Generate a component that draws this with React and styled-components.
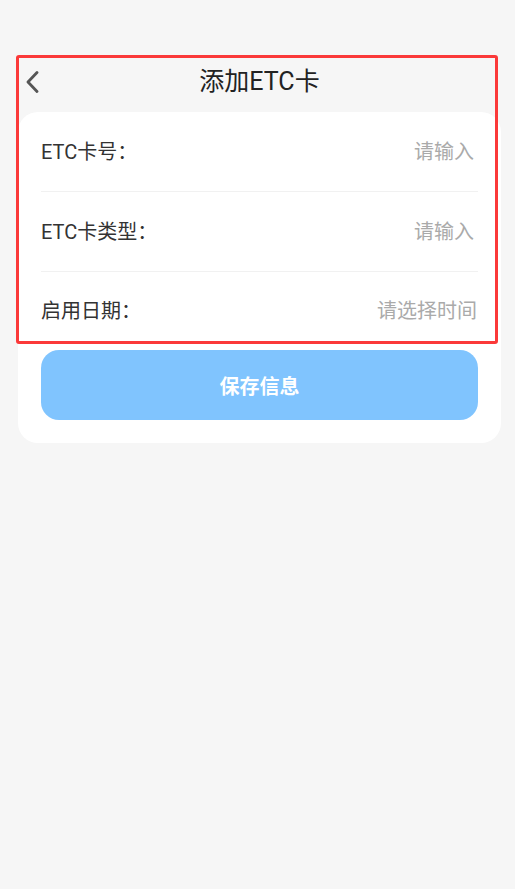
import React from "react";
import styled, { createGlobalStyle } from "styled-components";

const Global = createGlobalStyle`
  html, body { margin: 0; padding: 0; background: #f6f6f6; }
  body { font-family: Roboto, "Noto Sans CJK SC", sans-serif; }
  * { box-sizing: border-box; }
`;

const Page = styled.div`
  position: relative;
  min-height: 889px;
  padding: 51px 14px 0 18px;
  background: #f6f6f6;
`;

const Header = styled.div`
  position: relative;
  height: 61px;
  display: flex;
  align-items: center;
  justify-content: center;
`;

const Back = styled.button`
  position: absolute;
  left: 7px;
  top: 50%;
  transform: translateY(-50%);
  display: flex;
  align-items: center;
  padding: 0;
  border: 0;
  background: none;
  cursor: pointer;
`;

const Title = styled.h1`
  margin: 0;
  font-size: 25px;
  font-weight: 400;
  color: #222;
  line-height: 1;
`;

const Card = styled.div`
  background: #fff;
  border-radius: 20px;
  padding: 0 23px 23px;
`;

const Row = styled.div`
  display: flex;
  align-items: center;
  justify-content: space-between;
  height: ${(p) => (p.$last ? 78 : 80)}px;
  border-bottom: ${(p) => (p.$last ? "none" : "1px solid #f1f1f1")};
`;

const Label = styled.span`
  font-size: 20px;
  color: #333;
  line-height: 1;
`;

const Placeholder = styled.span`
  font-size: 20px;
  color: #aaa;
  line-height: 1;
  padding-right: ${(p) => (p.$inset ? 4 : 1)}px;
`;

const SaveButton = styled.button`
  display: flex;
  width: 100%;
  height: 70px;
  align-items: center;
  justify-content: center;
  border: 0;
  border-radius: 18px;
  background: #80c4fe;
  color: #fff;
  font-family: inherit;
  font-size: 20px;
  font-weight: 700;
`;

const Highlight = styled.div`
  position: absolute;
  left: 16px;
  top: 55px;
  width: 482px;
  height: 289px;
  border: 3px solid #fb3939;
  border-radius: 3px;
  pointer-events: none;
`;

const rows = [
  { label: "ETC卡号：", ph: "请输入", inset: true },
  { label: "ETC卡类型：", ph: "请输入", inset: true },
  { label: "启用日期：", ph: "请选择时间", inset: false },
];

export default function App() {
  return (
    <>
      <Global />
      <Page>
        <Header>
          <Back aria-label="返回">
            <svg width="14" height="22" viewBox="0 0 14 22">
              <polyline
                points="12,1.5 3,11 12,20.5"
                fill="none"
                stroke="#555"
                strokeWidth="2.8"
                strokeLinecap="round"
                strokeLinejoin="round"
              />
            </svg>
          </Back>
          <Title>添加ETC卡</Title>
        </Header>
        <Card>
          {rows.map((r, i) => (
            <Row key={r.label} $last={i === rows.length - 1}>
              <Label>{r.label}</Label>
              <Placeholder $inset={r.inset}>{r.ph}</Placeholder>
            </Row>
          ))}
          <SaveButton>保存信息</SaveButton>
        </Card>
        <Highlight />
      </Page>
    </>
  );
}
